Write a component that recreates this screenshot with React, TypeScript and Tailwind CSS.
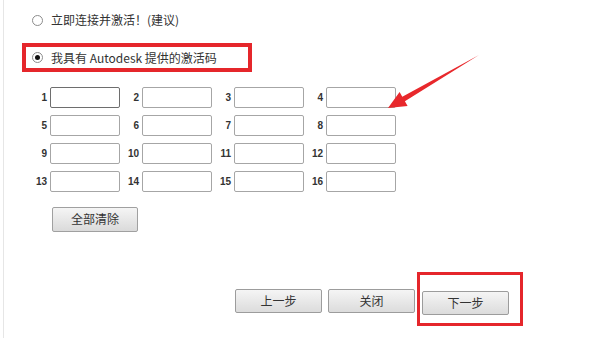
import React from 'react'

const FONT = { fontFamily: '"Noto Sans CJK SC", "Liberation Sans", sans-serif' }
const NUM_FONT = { fontFamily: '"Liberation Sans", Arial, sans-serif' }

function Radio({ checked }: { checked?: boolean }) {
  return (
    <span className="w-[11px] h-[11px] rounded-full border border-[#8c8c8c] bg-white flex items-center justify-center shrink-0">
      {checked && <span className="w-[5px] h-[5px] rounded-full bg-[#111]" />}
    </span>
  )
}

function Btn({ label, className = '' }: { label: string; className?: string }) {
  return (
    <button
      className={`h-[24px] w-[87px] rounded-[2px] border border-[#9c9c9c] bg-gradient-to-b from-[#f5f5f5] to-[#dcdcdc] text-[12px] text-[#333] ${className}`}
      style={FONT}
    >
      {label}
    </button>
  )
}

export default function App() {
  const cells = Array.from({ length: 16 }, (_, i) => i + 1)

  return (
    <div className="relative w-[610px] h-[338px] bg-white overflow-hidden" style={FONT}>
      <div className="ml-[3px] h-full border-l border-[#e6e6e6]">
        <div className="pt-[12px] pl-[28px] flex items-center gap-[8px] h-[28px] text-[12px] text-[#333]">
          <Radio />
          <span>立即连接并激活！(建议)</span>
        </div>

        <div className="mt-[15px] ml-[18px] w-[230px] h-[29px] border-4 border-[#e5262b] flex items-center gap-[8px] pl-[6px] text-[12px] text-[#333]">
          <Radio checked />
          <span>我具有 Autodesk 提供的激活码</span>
        </div>

        <div className="mt-[15px] ml-[26px] grid grid-cols-[92px_92px_92px_92px] gap-y-[7px]">
          {cells.map(n => (
            <div key={n} className="flex items-center h-[21px]">
              <span
                className="w-[20px] pr-[3px] text-right text-[10px] font-bold text-[#333]"
                style={NUM_FONT}
              >
                {n}
              </span>
              <div
                className={`w-[70px] h-[21px] rounded-[2px] bg-white border ${
                  n === 1 ? 'border-[#6e6e6e]' : 'border-[#a6a6a6]'
                }`}
              />
            </div>
          ))}
        </div>

        <div className="mt-[13px] ml-[48px]">
          <button
            className="h-[25px] w-[86px] rounded-[2px] border border-[#a0a0a0] bg-gradient-to-b from-[#f5f5f5] to-[#dadada] text-[12px] text-[#333]"
            style={FONT}
          >
            全部清除
          </button>
        </div>

        <div className="mt-[40px] pl-[231px] flex items-start">
          <Btn label="上一步" className="mt-[17px]" />
          <Btn label="关闭" className="mt-[17px] ml-[6px]" />
          <div className="ml-[2px] border-[3px] border-[#e5262b] pl-[2px] pr-[11px] pt-[14px] pb-[8px]">
            <Btn label="下一步" className="w-[86px]" />
          </div>
        </div>
      </div>

      <svg className="absolute left-0 top-0 pointer-events-none" width="610" height="338">
        <polygon
          points="479,55 404.9,101.2 407.6,105.9 388,108 399.6,92.1 402.3,96.8"
          fill="#e8282c"
        />
      </svg>
    </div>
  )
}
